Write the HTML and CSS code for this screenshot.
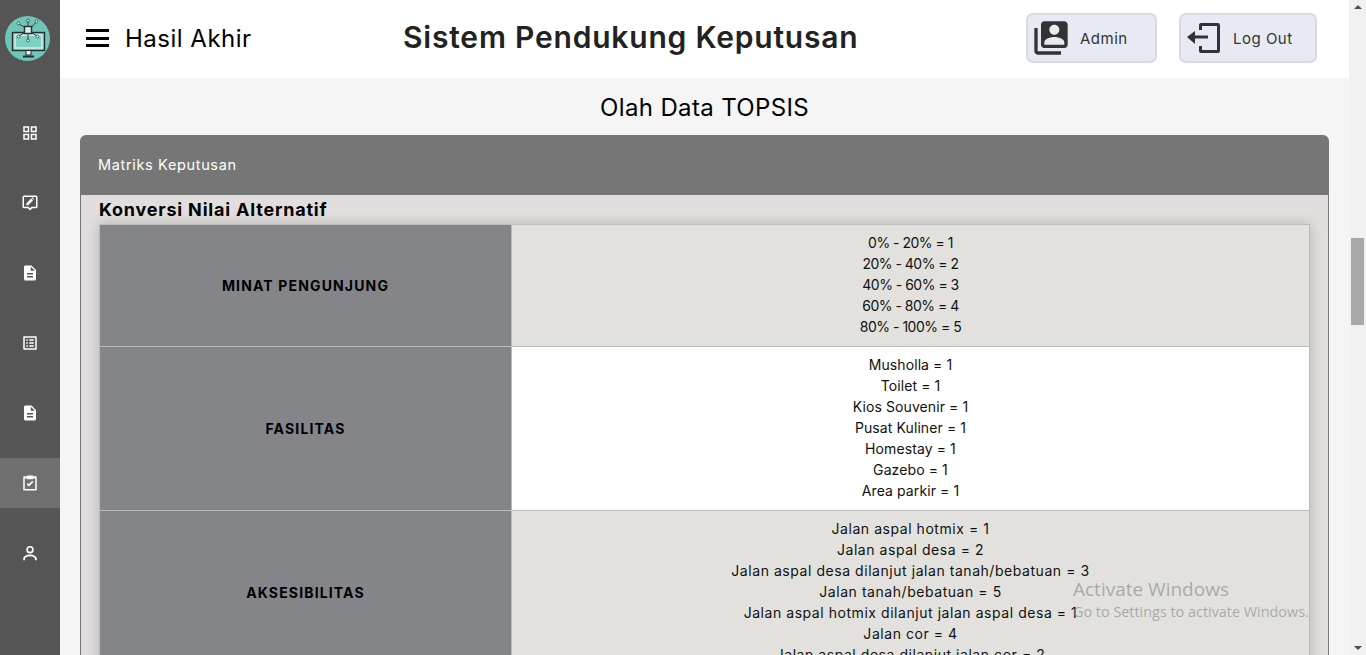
FILE: index.html
```html
<!DOCTYPE html>
<html lang="id">
<head>
    <meta charset="UTF-8">
    <meta name="viewport" content="width=device-width, initial-scale=1.0">
    <title>Hasil Akhir</title>
    <link rel="stylesheet" href="styles.css">
</head>
<body>

<!-- Sidebar -->
<nav class="sidebar">
    <div class="logo">
        <svg width="45" height="45" viewBox="0 0 45 45">
            <circle cx="22.5" cy="22.5" r="22.5" fill="#6fc6b6"/>
            <rect x="7.5" y="16.5" width="32" height="18" fill="#7fd0c0" stroke="#26302e" stroke-width="1.4"/>
            <rect x="10" y="19" width="27" height="13" fill="none" stroke="#e8f6f2" stroke-width="1.2"/>
            <path d="M21 34.5v4.5h5v-4.5z" fill="#e8f6f2" stroke="#26302e"/>
            <path d="M18 40.5h11" stroke="#26302e" stroke-width="2"/>
            <rect x="19.5" y="10.5" width="7" height="7" fill="#d8efe9" stroke="#26302e" stroke-width="1.4"/>
            <path d="M19 11l-5-3M23 10V5M27 11l4-5M19 17l-5 3M27 17l5 3M23 18v6" stroke="#26302e" stroke-width=".9" fill="none"/>
            <g fill="#e8f6f2" stroke="#26302e" stroke-width=".7">
                <circle cx="13.5" cy="7.5" r="1.4"/><circle cx="23" cy="4.5" r="1.4"/><circle cx="31.5" cy="5.5" r="1.4"/>
                <circle cx="13.5" cy="20.5" r="1.4"/><circle cx="32.5" cy="20.5" r="1.4"/><circle cx="23" cy="24.5" r="1.4"/>
            </g>
        </svg>
    </div>
    <ul class="menu">
        <li class="menu-item">
            <svg class="menu-icon" viewBox="0 0 24 24"><path d="M3 3v8h8V3H3zm6 6H5V5h4v4zm-6 4v8h8v-8H3zm6 6H5v-4h4v4zm4-16v8h8V3h-8zm6 6h-4V5h4v4zm-6 4v8h8v-8h-8zm6 6h-4v-4h4v4z"/></svg>
        </li>
        <li class="menu-item">
            <svg class="menu-icon" viewBox="0 0 24 24"><path d="M4 2h16a2 2 0 0 1 2 2v13a2 2 0 0 1-2 2h-5l-3 3-3-3H4a2 2 0 0 1-2-2V4a2 2 0 0 1 2-2zm0 2v13h6l2 2 2-2h6V4H4z"/><path d="M7 15v-2.5l6.500-6.500 2.500 2.500-6.500 6.500H7zM14 5l1-1 2.500 2.500-1 1z"/></svg>
        </li>
        <li class="menu-item">
            <svg class="menu-icon" viewBox="0 0 24 24"><path d="M14 2H6c-1.100 0-2 .9-2 2v16c0 1.100.9 2 2 2h12c1.100 0 2-.9 2-2V8l-6-6zm2 16H8v-2h8v2zm0-4H8v-2h8v2zm-3-5V3.500L18.500 9H13z"/></svg>
        </li>
        <li class="menu-item">
            <svg class="menu-icon" viewBox="0 0 24 24"><path d="M19 5v14H5V5h14m1.100-2H3.900c-.5 0-.9.4-.9.9v16.200c0 .4.4.9.9.9h16.200c.4 0 .9-.5.9-.9V3.900c0-.5-.5-.9-.9-.9zM11 7h6v2h-6V7zm0 4h6v2h-6v-2zm0 4h6v2h-6zM7 7h2v2H7zm0 4h2v2H7zm0 4h2v2H7z"/></svg>
        </li>
        <li class="menu-item">
            <svg class="menu-icon" viewBox="0 0 24 24"><path d="M14 2H6c-1.100 0-2 .9-2 2v16c0 1.100.9 2 2 2h12c1.100 0 2-.9 2-2V8l-6-6zm2 16H8v-2h8v2zm0-4H8v-2h8v2zm-3-5V3.500L18.500 9H13z"/></svg>
        </li>
        <li class="menu-item active">
            <svg class="menu-icon" viewBox="0 0 24 24"><path d="M8 2h8v1h4a1 1 0 0 1 1 1v17a1 1 0 0 1-1 1H4a1 1 0 0 1-1-1V4a1 1 0 0 1 1-1h4V2zM5 6v14h14V6h-3v1H8V6H5z"/><path d="M10.500 16.500L7.500 13.500l1.500-1.500 1.500 1.500 4.500-4.500 1.500 1.500z"/></svg>
        </li>
        <li class="menu-item">
            <svg class="menu-icon" viewBox="0 0 24 24"><path d="M12 2.500a5 5 0 1 1 0 10 5 5 0 0 1 0-10zm0 2.200a2.800 2.800 0 1 0 0 5.600 2.800 2.800 0 0 0 0-5.600zM12 14c4.500 0 9 2.200 9 5.500V21.500h-2.400v-2c0-1.500-3-3.200-6.600-3.200s-6.600 1.700-6.600 3.200v2H3v-2C3 16.200 7.500 14 12 14z"/></svg>
        </li>
    </ul>
</nav>

<div class="main">
    <!-- Header atas -->
    <header class="topbar">
        <div class="hamburger"><span></span><span></span><span></span></div>
        <div class="page-name">Hasil Akhir</div>
        <div class="app-title">Sistem Pendukung Keputusan</div>
        <a class="top-btn btn-admin">
            <svg width="40" height="40" viewBox="0 0 24 24"><path d="M4 6H2v14c0 1.100.9 2 2 2h14v-2H4V6zm16-4H8c-1.100 0-2 .9-2 2v12c0 1.100.9 2 2 2h12c1.100 0 2-.9 2-2V4c0-1.100-.9-2-2-2zm-6 2c1.660 0 3 1.340 3 3s-1.340 3-3 3-3-1.340-3-3 1.340-3 3-3zm6 12H8v-1.500c0-2 4-3.100 6-3.100s6 1.100 6 3.100V16z"/></svg>
            <span>Admin</span>
        </a>
        <a class="top-btn btn-logout">
            <svg width="36" height="34" viewBox="0 0 36 34"><path d="M13 9V4a2 2 0 0 1 2-2h17a2 2 0 0 1 2 2v26a2 2 0 0 1-2 2H15a2 2 0 0 1-2-2v-5h3v4h15V5H16v4z"/><path d="M1 16l8-6v4.500h13v3H9V23z"/></svg>
            <span>Log Out</span>
        </a>
    </header>

    <div class="content">
        <h2 class="section-title">Olah Data TOPSIS</h2>

        <div class="card">
            <div class="card-header">Matriks Keputusan</div>
            <div class="card-body">
                <h3 class="table-title">Konversi Nilai Alternatif</h3>
                <table class="convert-table">
                    <tbody>
                        <tr class="row-angka">
                            <th>MINAT PENGUNJUNG</th>
                            <td>0% - 20% = 1<br>20% - 40% = 2<br>40% - 60% = 3<br>60% - 80% = 4<br>80% - 100% = 5</td>
                        </tr>
                        <tr class="row-fasilitas">
                            <th>FASILITAS</th>
                            <td>Musholla = 1<br>Toilet = 1<br>Kios Souvenir = 1<br>Pusat Kuliner = 1<br>Homestay = 1<br>Gazebo = 1<br>Area parkir = 1</td>
                        </tr>
                        <tr class="row-akses">
                            <th>AKSESIBILITAS</th>
                            <td>Jalan aspal hotmix = 1<br>Jalan aspal desa = 2<br>Jalan aspal desa dilanjut jalan tanah/bebatuan = 3<br>Jalan tanah/bebatuan = 5<br>Jalan aspal hotmix dilanjut jalan aspal desa = 1<br>Jalan cor = 4<br>Jalan aspal desa dilanjut jalan cor = 2</td>
                        </tr>
                    </tbody>
                </table>
            </div>
        </div>
    </div>
</div>

<!-- Scrollbar halaman -->
<div class="scrollbar">
    <span class="arrow-up"></span>
    <div class="scroll-track"><div class="scroll-thumb"></div></div>
    <span class="arrow-down"></span>
</div>

<div class="activate">
    <div class="activate-big">Activate Windows</div>
    <div class="activate-small">Go to Settings to activate Windows.</div>
</div>

</body>
</html>
```

FILE: styles.css
```css
* {
    box-sizing: border-box;
}
html, body {
    height: 655px;
    overflow: hidden;
}
body {
    margin: 0;
    display: flex;
    font-family: Inter, "Open Sans", sans-serif;
    background-color: #f5f5f5;
    color: #000;
}

/* sidebar */
.sidebar {
    width: 60px;
    flex-shrink: 0;
    background-color: #555;
}
.logo {
    height: 108px;
    padding: 16px 0 0 5px;
}
.menu {
    list-style: none;
    margin: 0;
    padding: 0;
    display: flex;
    flex-direction: column;
    gap: 20px;
}
.menu-item {
    height: 50px;
    display: flex;
    align-items: center;
    justify-content: center;
}
.menu-item.active {
    background-color: #6f6f6f;
}
.menu-icon {
    width: 18px;
    height: 18px;
    fill: #fff;
}

/* header */
.main {
    flex: 1;
    min-width: 0;
    height: 655px;
    overflow: hidden;
}
.topbar {
    height: 78px;
    background-color: #fff;
    display: flex;
    align-items: center;
    padding: 0 0 2px 26px;
}
.hamburger {
    width: 23px;
    height: 18px;
    display: flex;
    flex-direction: column;
    justify-content: space-between;
}
.hamburger span {
    display: block;
    height: 3px;
    background-color: #000;
}
.page-name {
    margin-left: 16px;
    width: 278px;
    font-size: 24px;
    letter-spacing: 0.5px;
    white-space: nowrap;
}
.app-title {
    width: 623px;
    padding-bottom: 2px;
    font-size: 30px;
    font-weight: 600;
    letter-spacing: 0.8px;
    color: #222;
    white-space: nowrap;
}
.top-btn {
    height: 50px;
    display: flex;
    align-items: center;
    background-color: #e8eaf3;
    border: 2px solid #d9d9e3;
    border-radius: 7px;
    color: #333;
    font-size: 15px;
    letter-spacing: 0.5px;
}
.top-btn svg {
    fill: #333;
    flex-shrink: 0;
}
.btn-admin {
    width: 131px;
    padding-left: 3px;
    gap: 9px;
    margin-right: 22px;
}
.btn-logout {
    width: 138px;
    padding-left: 5px;
    gap: 11px;
}

/* isi */
.content {
    padding: 0 20px;
}
.section-title {
    margin: 0;
    height: 57px;
    line-height: 60px;
    font-size: 24px;
    font-weight: 400;
    letter-spacing: 0.35px;
    text-align: center;
}
.card {
    border-radius: 6px 6px 0 0;
}
.card-header {
    height: 60px;
    line-height: 60px;
    padding-left: 18px;
    background-color: #767676;
    border-radius: 6px 6px 0 0;
    color: #fff;
    font-size: 14.500px;
    letter-spacing: 0.65px;
}
.card-body {
    background-color: #e2dede;
    border-left: 1px solid #777;
    border-right: 1px solid #777;
    padding: 0 18px 40px;
}
.table-title {
    margin: 0;
    height: 29px;
    line-height: 29px;
    font-size: 18px;
    font-weight: 700;
    letter-spacing: 0.8px;
}
.convert-table {
    width: 100%;
    table-layout: fixed;
    border-collapse: collapse;
    box-shadow: 0 0 12px rgba(0, 0, 0, 0.2);
    font-size: 14px;
    line-height: 21px;
}
.convert-table th, .convert-table td {
    border: 1px solid #bdbcbc;
    padding: 7px 8px 9px;
    text-align: center;
}
.convert-table th {
    width: 412px;
    padding: 8px;
    background-color: #848589;
    font-size: 14px;
    font-weight: 700;
    letter-spacing: 1.15px;
}
.convert-table td {
    background-color: #fff;
    color: #111;
}
.convert-table tr:nth-child(odd) td {
    background-color: #e2e1dd;
}
.row-angka td {
    letter-spacing: -0.5px;
}
.row-fasilitas td {
    letter-spacing: 0.1px;
}
.row-akses td {
    letter-spacing: 0.55px;
}

/* scrollbar */
.scrollbar {
    width: 17px;
    flex-shrink: 0;
    background-color: #f1f1f1;
    display: flex;
    flex-direction: column;
    align-items: center;
    padding: 5px 0;
}
.arrow-up, .arrow-down {
    width: 0;
    height: 0;
    border-left: 4px solid transparent;
    border-right: 4px solid transparent;
}
.arrow-up {
    border-bottom: 4px solid #505050;
}
.arrow-down {
    border-top: 4px solid #505050;
}
.scroll-track {
    flex: 1;
    width: 100%;
    padding: 229px 2px 0;
}
.scroll-thumb {
    height: 87px;
    background-color: #a8a8a8;
}

/* watermark */
.activate {
    position: absolute;
    left: 1073px;
    top: 576px;
    font-family: "Open Sans", sans-serif;
    color: rgba(130, 130, 130, 0.6);
    white-space: nowrap;
}
.activate-big {
    font-size: 19px;
    line-height: 26px;
}
.activate-small {
    font-size: 14.400px;
    line-height: 20px;
}
```
